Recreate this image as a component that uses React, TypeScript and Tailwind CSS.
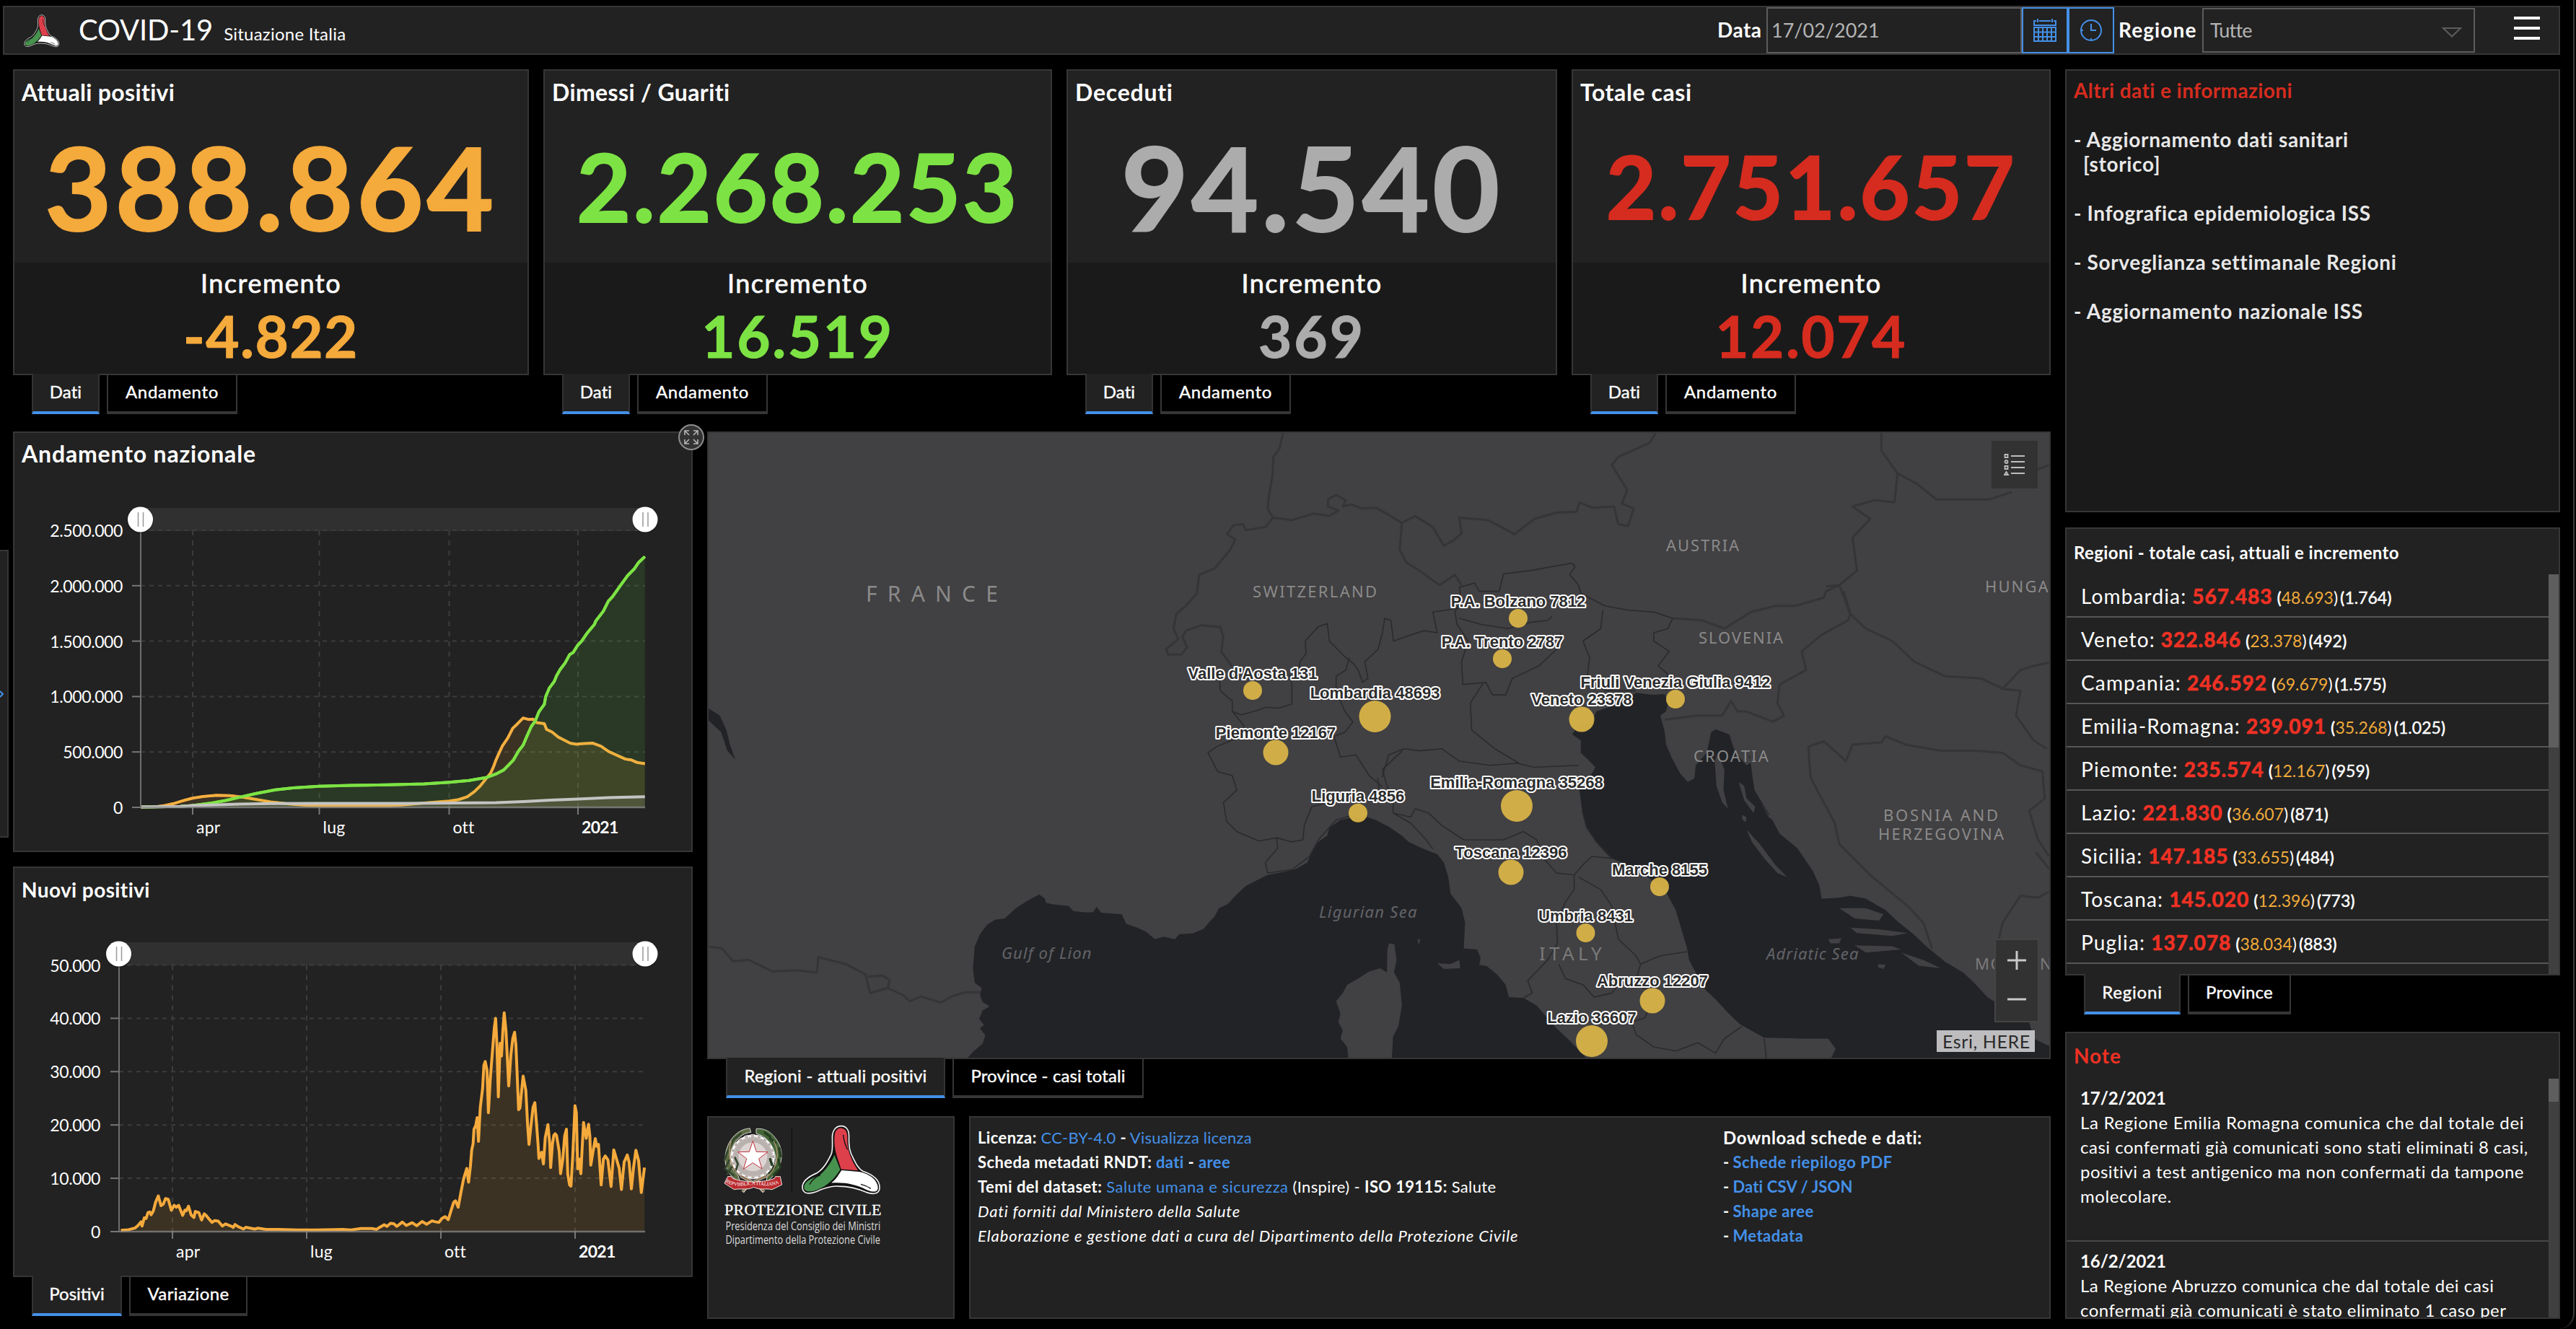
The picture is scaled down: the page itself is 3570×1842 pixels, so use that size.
import type { ReactNode } from "react";
import clsx from "clsx";

/* ---------- shared pieces ---------- */

function Panel({ className, children }: { className?: string; children?: ReactNode }) {
  return <section className={clsx("box-border overflow-hidden border-2 border-[#363636] bg-[#222222]", className)}>{children}</section>;
}

function Tabs({ tabs }: { tabs: { label: string; width: string; track: string }[] }) {
  return (
    <div className="relative z-10 ml-[26px] flex h-[54px] gap-[10px]">
      {tabs.map((t, i) => (
        <button
          key={t.label}
          className={clsx(
            "flex shrink-0 justify-center border-x-2 border-b-4 text-2xl leading-[46px] [-webkit-text-stroke:0.4px_white]",
            t.width,
            t.track,
            i === 0 ? "-mt-[2px] h-[56px] border-x-[#333333] border-b-[#4490e8] bg-[#222222] pt-[2px]" : "border-[#363636] bg-black",
          )}
        >
          {t.label}
        </button>
      ))}
    </div>
  );
}

function CivilProtectionMark({ className }: { className: string }) {
  return (
    <svg className={className} viewBox="388 56 340 296" preserveAspectRatio="none">
      <path
        d="M520 108C520 76 538 61 557 61C579 61 591 78 590 106C589 150 594 172 608 196C620 220 630 240 648 250C692 264 722 290 719 322C716 347 690 348 662 338C630 324 590 313 545 313C512 311 482 322 452 336C420 347 396 346 394 318C394 290 422 272 455 258C484 240 500 210 515 180C523 165 520 140 520 108Z"
        fill="#111" stroke="#f4f4f4" strokeWidth="5"
      />
      <path d="M529 106C531 76 545 68 560 70C580 74 584 92 583 116C582 165 602 208 628 247L557 242C546 200 526 170 529 106Z" fill="#dd3f4b" />
      <path d="M529 182C515 215 490 248 465 268C430 280 399 296 401 320C405 341 440 338 470 322C512 302 542 264 553 243Z" fill="#47924f" />
      <path d="M559 246L630 252C680 260 712 290 712 320C710 342 685 338 660 326C620 305 570 295 516 299C536 284 548 262 559 246Z" fill="#fff" />
      <path d="M566 98C568 120 574 140 584 160M470 266C450 272 432 290 424 306M640 305C655 309 668 314 682 323" fill="none" stroke="#111" strokeWidth="4" />
    </svg>
  );
}

/* ---------- header ---------- */

function Header() {
  return (
    <header className="ml-1 flex h-[68px] w-[3544px] border-2 border-[#363636] bg-[#222222] text-white">
      <CivilProtectionMark className="ml-[27px] mt-[10px] h-[46px] w-[50px]" />
      <div className="ml-[26px] flex items-baseline gap-[15px] leading-[62px]">
        <h1 className="text-[40px] tracking-[-0.15px]">COVID-19</h1>
        <span className="text-2xl tracking-[0.23px]">Situazione Italia</span>
      </div>
      <div className="ml-auto flex h-16">
        <label className="w-[68px] text-[28px] font-bold leading-[63px] tracking-[0.5px]">Data</label>
        <div className="h-16 w-[354px] border-2 border-[#5c5c5c] pl-[5px] text-[27px] leading-[60px] text-[#b4b4b4]">17/02/2021</div>
        <button className="flex h-16 w-16 items-center justify-center border-2 border-[#4490e8]">
          <svg className="h-8 w-8" viewBox="0 0 32 32" fill="none" stroke="#4490e8" strokeWidth="2">
            <path d="M4 3H1V9H31V3H28M8 3H24M6 0V5M26 0V5M1 12H31V31H1ZM1 18.5H31M1 25H31M7 12V31M13 12V31M19 12V31M25 12V31" />
          </svg>
        </button>
        <button className="flex h-16 w-16 items-center justify-center border-2 border-[#4490e8]">
          <svg className="h-[30px] w-[30px]" viewBox="0 0 30 30" fill="none" stroke="#4490e8" strokeWidth="2">
            <circle cx="15" cy="15" r="14" />
            <path d="M15 6V15H22M15 26V29M1 15H4" />
          </svg>
        </button>
        <label className="ml-[6px] w-[116px] text-[28px] font-bold leading-[63px] tracking-[1.1px]">Regione</label>
        <div className="mt-px flex h-[62px] w-[378px] items-center border-2 border-[#5c5c5c] pl-[9px] text-[27px] tracking-[-0.8px] text-[#b4b4b4]">
          Tutte
          <svg className="ml-auto mr-4 mt-[6px] h-[14px] w-7" viewBox="0 0 28 14" fill="none" stroke="#5c5c5c" strokeWidth="2">
            <path d="M2 1H26L14 12.5Z" />
          </svg>
        </div>
        <button className="ml-[54px] mr-[26px] mt-[13px] flex w-9 flex-col gap-[10px]">
          <span className="h-1 bg-white" />
          <span className="h-1 bg-white" />
          <span className="h-1 bg-white" />
        </button>
      </div>
    </header>
  );
}

/* ---------- indicator cards ---------- */

const CARDS = [
  { title: "Attuali positivi", track: "tracking-[0.33px]", w: "w-[715px]", color: "text-[#f5aa3c]", big: "388.864", size: "text-[160px] tracking-[4.6px]", inc: "-4.822", incTrack: "tracking-[1.4px]" },
  { title: "Dimessi / Guariti", track: "tracking-[0.37px]", w: "w-[705px]", color: "text-[#7de344]", big: "2.268.253", size: "text-[130px] tracking-[2.6px]", inc: "16.519", incTrack: "tracking-[2.6px]" },
  { title: "Deceduti", track: "tracking-[0.76px]", w: "w-[680px]", color: "text-[#acacac]", big: "94.540", size: "text-[161px] tracking-[3.9px]", inc: "369", incTrack: "tracking-[3px]" },
  { title: "Totale casi", track: "tracking-[0.59px]", w: "w-[664px]", color: "text-[#d62c1f]", big: "2.751.657", size: "text-[120px] tracking-[2.7px]", inc: "12.074", incTrack: "tracking-[2.4px]" },
];

function Cards() {
  return (
    <div className="flex gap-5">
      {CARDS.map((c) => (
        <div key={c.title} className={c.w}>
          <Panel className="flex h-[424px] flex-col">
            <h2 className={clsx("pl-[10px] pt-[10px] text-[32px] font-bold leading-10", c.track)}>{c.title}</h2>
            <div className={clsx("flex flex-1 items-center justify-center pt-1 font-bold leading-none [-webkit-text-stroke:2px_currentColor]", c.color, c.size)}>{c.big}</div>
            <div className="flex h-[154px] flex-col items-center bg-[#1a1a1a] pt-[6px]">
              <span className="text-[36px] leading-[44px] tracking-[1.5px] [-webkit-text-stroke:0.7px_white]">Incremento</span>
              <span className={clsx("mt-[11px] text-[80px] font-bold leading-none [-webkit-text-stroke:1px_currentColor]", c.color, c.incTrack)}>{c.inc}</span>
            </div>
          </Panel>
          <Tabs tabs={[{ label: "Dati", width: "w-[94px]", track: "tracking-[0.1px]" }, { label: "Andamento", width: "w-[181px]", track: "tracking-[0.7px]" }]} />
        </div>
      ))}
    </div>
  );
}

/* ---------- charts ---------- */

type ChartProps = {
  viewBox: string;
  height: string;
  x0: number;
  trackY: number;
  trackH: number;
  y0: number;
  step: number;
  yLabels: string[];
  xTicks: { x: number; label: string }[];
  labelX: number;
  children: ReactNode;
};

const X1 = 894;

function Chart({ viewBox, height, x0, trackY, trackH, y0, step, yLabels, xTicks, labelX, children }: ChartProps) {
  const top = y0 - step * (yLabels.length - 1);
  const cy = trackY + trackH / 2;
  return (
    <svg className={clsx("block w-[938px]", height)} viewBox={viewBox}>
      <rect x={x0} y={trackY} width={X1 - x0} height={trackH} fill="#303030" />
      {yLabels.map((l, i) => {
        const y = y0 - step * i;
        return (
          <g key={l}>
            {i > 0 && <line x1={x0} x2={X1} y1={y} y2={y} stroke="#3c3c3c" strokeWidth="2" strokeDasharray="6 6" />}
            {i < yLabels.length - 1 && <line x1={x0 - 12} x2={x0} y1={y} y2={y} stroke="#777" strokeWidth="2" />}
            <text x={labelX} y={y + 9} textAnchor="end" className="fill-white text-[23px] tracking-[-0.4px]">{l}</text>
          </g>
        );
      })}
      {xTicks.map((t, i) => (
        <g key={t.label}>
          <line x1={t.x} x2={t.x} y1={top} y2={y0} stroke="#3c3c3c" strokeWidth="2" strokeDasharray="7 7" />
          <line x1={t.x} x2={t.x} y1={y0} y2={y0 + 10} stroke="#777" strokeWidth="2" />
          <text x={t.x + 5} y={y0 + 36} className={clsx("fill-white text-[23px]", i === 3 ? "font-bold tracking-[-0.7px]" : "tracking-[0.2px]")}>{t.label}</text>
        </g>
      ))}
      {children}
      <line x1={x0} x2={x0} y1={cy} y2={y0} stroke="#6e6e6e" strokeWidth="2" />
      <line x1={x0} x2={X1} y1={y0} y2={y0} stroke="#8a8a8a" strokeOpacity="0.75" strokeWidth="2.5" />
      {[x0 - 0.5, X1].map((x) => (
        <g key={x}>
          <circle cx={x} cy={cy + 1} r="18" fill="#111" opacity="0.5" />
          <circle cx={x} cy={cy} r="17.5" fill="#fff" />
          <path d={`M${x - 3} ${cy - 10}V${cy + 10}M${x + 4} ${cy - 10}V${cy + 10}`} stroke="#999" strokeWidth="1.5" />
        </g>
      ))}
    </svg>
  );
}

type SeriesProps = { points: string; from: number; to: number; base: number; color: string; fill: string };

function Series({ points, from, to, base, color, fill }: SeriesProps) {
  return (
    <>
      <path d={`M${from} ${base}L${points}L${to} ${base}Z`} className={fill} />
      <polyline points={points} fill="none" stroke={color} strokeWidth="4" strokeLinejoin="round" vectorEffect="non-scaling-stroke" />
    </>
  );
}

const POSITIVI =
  "312,1362 345,1361 365,1357 385,1350 405,1340 427,1331 450,1325 480,1321 510,1322 540,1328 570,1336 600,1344 640,1351 680,1356 720,1358 780,1358 860,1358 900,1354 940,1348 996,1341 1017,1336 1036,1326 1052,1308 1065,1288 1078,1262 1088,1243 1095,1218 1099,1200 1106,1175 1114,1148 1126,1120 1137,1086 1147,1071 1160,1050 1172,1055 1182,1054 1190,1066 1207,1070 1212,1090 1224,1099 1238,1117 1247,1124 1264,1138 1278,1142 1290,1140 1314,1138 1333,1149 1349,1167 1370,1182 1387,1194 1400,1197 1413,1206 1430,1210";
const GUARITI =
  "312,1362 400,1360 427,1357 470,1348 500,1339 530,1328 570,1314 610,1302 650,1295 708,1289 780,1286 860,1284 940,1281 996,1275 1040,1269 1080,1258 1100,1246 1117,1232 1128,1214 1138,1198 1150,1165 1160,1145 1168,1115 1178,1080 1187,1060 1195,1028 1207,1002 1210,975 1218,945 1229,922 1234,902 1242,880 1253,857 1263,828 1271,820 1281,795 1290,780 1302,752 1318,722 1321,710 1338,675 1349,640 1358,625 1375,587 1392,550 1406,528 1416,505 1430,484";
const DECEDUTI =
  "312,1362 400,1360 427,1357 470,1355 530,1352 600,1350 700,1349 900,1349 1000,1348 1100,1347 1160,1343 1220,1338 1281,1334 1350,1329 1430,1326";
const NUOVI =
  "268,1244 285,1242 300,1236 306,1228 313,1216 315,1230 320,1203 324,1205 328,1186 332,1184 335,1193 340,1180 345,1152 351,1131 357,1163 362,1158 367,1140 373,1142 380,1178 386,1162 391,1168 396,1162 405,1195 410,1178 413,1180 418,1165 424,1194 430,1202 433,1182 441,1186 447,1210 453,1190 457,1195 463,1206 470,1218 476,1212 484,1214 493,1230 500,1223 515,1232 517,1235 521,1225 528,1232 540,1240 545,1234 565,1240 572,1237 590,1241 620,1241 660,1243 700,1243 760,1241 778,1243 800,1238 825,1238 835,1241 840,1236 852,1226 858,1231 866,1221 873,1222 880,1231 892,1217 901,1228 914,1219 924,1229 936,1215 946,1224 958,1213 965,1216 973,1218 980,1205 987,1199 994,1209 1000,1180 1006,1152 1010,1147 1016,1168 1022,1120 1028,1075 1035,1041 1039,1086 1043,1035 1046,980 1049,960 1051,912 1055,900 1058,874 1061,952 1065,840 1070,780 1073,702 1076,690 1080,720 1083,858 1087,750 1092,655 1096,580 1099,548 1102,640 1105,806 1109,630 1112,672 1115,590 1118,530 1122,590 1128,770 1133,665 1137,615 1141,594 1144,635 1150,848 1153,842 1157,780 1160,738 1166,785 1170,900 1173,962 1177,905 1182,840 1186,825 1190,900 1193,960 1195,1008 1201,988 1205,1026 1209,940 1215,897 1219,960 1221,1038 1225,960 1228,932 1231,927 1234,932 1240,985 1243,1058 1248,1010 1252,935 1256,912 1259,1060 1263,1095 1266,1099 1270,1000 1275,835 1278,858 1281,1042 1284,1010 1288,1058 1291,970 1294,890 1300,942 1305,896 1308,935 1310,1030 1315,985 1320,943 1323,968 1327,962 1333,1095 1338,1010 1342,1000 1348,1013 1355,1100 1361,980 1367,1010 1373,1040 1378,1110 1384,1020 1391,997 1395,1020 1400,1108 1405,1035 1410,981 1416,1015 1422,1120 1429,1038";

function ChartColumn() {
  return (
    <div className="flex w-[942px] flex-col">
      <Panel className="h-[583px]">
        <h2 className="h-[47px] pl-[10px] pt-[9px] text-[32px] font-bold leading-10 tracking-[0.83px]">Andamento nazionale</h2>
        <Chart
          viewBox="20 647 938 532" height="h-[532px]" x0={195} trackY={704} trackH={32} y0={1119} step={76.8} labelX={170}
          yLabels={["0", "500.000", "1.000.000", "1.500.000", "2.000.000", "2.500.000"]}
          xTicks={[{ x: 267, label: "apr" }, { x: 442.5, label: "lug" }, { x: 622.5, label: "ott" }, { x: 801, label: "2021" }]}
        >
          <g transform="translate(0 580) scale(0.625 0.3954)">
            <Series points={POSITIVI} from={312} to={1430} base={1363} color="#f5aa3c" fill="fill-[#f5aa3c]/12" />
            <Series points={GUARITI} from={312} to={1430} base={1363} color="#7de344" fill="fill-[#5fc840]/14" />
            <polyline points={POSITIVI} fill="none" stroke="#f5b041" strokeWidth="3.2" strokeOpacity="0.85" vectorEffect="non-scaling-stroke" />
            <polyline points={GUARITI} fill="none" stroke="#7de344" strokeWidth="4" vectorEffect="non-scaling-stroke" />
            <Series points={DECEDUTI} from={312} to={1430} base={1363} color="#c4c4c4" fill="fill-[#c4c4c4]/12" />
          </g>
        </Chart>
      </Panel>
      <Panel className="mt-5 h-[569px]">
        <h2 className="h-[49px] pl-[10px] pt-[10px] text-[28px] font-bold leading-10 tracking-[0.4px]">Nuovi positivi</h2>
        <Chart
          viewBox="20 1252 938 516" height="h-[516px]" x0={165} trackY={1306} trackH={32} y0={1707} step={73.9} labelX={139}
          yLabels={["0", "10.000", "20.000", "30.000", "40.000", "50.000"]}
          xTicks={[{ x: 239, label: "apr" }, { x: 425, label: "lug" }, { x: 611, label: "ott" }, { x: 797, label: "2021" }]}
        >
          <g transform="translate(0 1180) scale(0.625 0.4222)">
            <Series points={NUOVI} from={268} to={1429} base={1248} color="#f5aa3c" fill="fill-[#f5aa3c]/12" />
          </g>
        </Chart>
      </Panel>
      <Tabs tabs={[{ label: "Positivi", width: "w-[125px]", track: "tracking-[0px]" }, { label: "Variazione", width: "w-[164px]", track: "tracking-[0.4px]" }]} />
    </div>
  );
}

/* ---------- map ---------- */

const MARKERS = [
  { x: 1736, y: 957, r: 13, label: "Valle d'Aosta 131" },
  { x: 1905.5, y: 993, r: 22, label: "Lombardia 48693" },
  { x: 1768, y: 1043, r: 17.5, label: "Piemonte 12167" },
  { x: 1882, y: 1126.7, r: 13, label: "Liguria 4856" },
  { x: 2104, y: 857, r: 13, label: "P.A. Bolzano 7812" },
  { x: 2082, y: 913, r: 13, label: "P.A. Trento 2787" },
  { x: 2322, y: 969, r: 13, label: "Friuli Venezia Giulia 9412" },
  { x: 2192, y: 997, r: 17.5, label: "Veneto 23378" },
  { x: 2102, y: 1117, r: 22, label: "Emilia-Romagna 35268" },
  { x: 2094, y: 1209, r: 17.5, label: "Toscana 12396" },
  { x: 2300, y: 1229, r: 13, label: "Marche 8155" },
  { x: 2197.5, y: 1293, r: 13, label: "Umbria 8431" },
  { x: 2290, y: 1387, r: 17.5, label: "Abruzzo 12207" },
  { x: 2206, y: 1443, r: 22, label: "Lazio 36607" },
];

const PLACES = [
  { x: 1200, y: 834, t: "FRANCE", c: "text-[30px] tracking-[14.2px] fill-[#8a8a8a]" },
  { x: 1736, y: 828, t: "SWITZERLAND", c: "text-[22px] tracking-[2.3px] fill-[#8a8a8a]" },
  { x: 2309, y: 764, t: "AUSTRIA", c: "text-[22px] tracking-[1.9px] fill-[#8a8a8a]" },
  { x: 2354, y: 892, t: "SLOVENIA", c: "text-[22px] tracking-[1.9px] fill-[#8a8a8a]" },
  { x: 2751, y: 821, t: "HUNGA", c: "text-[22px] tracking-[2.1px] fill-[#8a8a8a]" },
  { x: 2347, y: 1056, t: "CROATIA", c: "text-[22px] tracking-[2.2px] fill-[#8a8a8a]" },
  { x: 2610, y: 1138, t: "BOSNIA AND", c: "text-[22px] tracking-[2.75px] fill-[#8a8a8a]" },
  { x: 2603, y: 1164, t: "HERZEGOVINA", c: "text-[22px] tracking-[2.25px] fill-[#8a8a8a]" },
  { x: 2737, y: 1344, t: "MO", c: "text-[22px] tracking-[1.5px] fill-[#7a7a7a]" },
  { x: 2827, y: 1344, t: "N", c: "text-[22px] fill-[#7a7a7a]" },
  { x: 2133, y: 1331, t: "ITALY", c: "text-[26px] tracking-[5.3px] fill-[#7a7a7a]" },
  { x: 1388, y: 1329, t: "Gulf of Lion", c: "text-[22px] italic tracking-[1.1px] fill-[#626367]" },
  { x: 1828, y: 1272, t: "Ligurian Sea", c: "text-[22px] italic tracking-[1.25px] fill-[#626367]" },
  { x: 2448, y: 1330, t: "Adriatic Sea", c: "text-[22px] italic tracking-[1.1px] fill-[#626367]" },
];

const WEST_SEA =
  "M603 1530L620 1510 640 1492 646 1472 634 1455 643 1447 632 1432 640 1412 656 1402 640 1392 634 1375 638 1358 622 1345 618 1310 622 1258 634 1228 650 1205 668 1193 690 1190 715 1165 745 1145 768 1132 781 1142 783 1152 800 1156 835 1160 845 1172 870 1175 890 1175 898 1162 908 1176 955 1180 965 1203 990 1212 1010 1222 1030 1240 1050 1234 1075 1240 1085 1228 1115 1226 1140 1215 1152 1200 1165 1185 1175 1165 1195 1155 1215 1132 1235 1112 1260 1098 1285 1085 1320 1078 1350 1070 1375 1055 1385 1030 1400 1005 1420 990 1425 970 1450 952 1480 945 1510 945 1530 952 1559 968 1589 990 1604 1005 1634 1020 1669 1035 1684 1055 1694 1090 1699 1130 1724 1165 1732 1200 1729 1262 1759 1265 1767 1285 1764 1302 1781 1305 1804 1325 1824 1350 1831 1380 1864 1382 1894 1400 1914 1425 1939 1455 1969 1485 2009 1530Z";
const CORSICA =
  "M1468 1530L1465 1500 1450 1480 1455 1460 1445 1440 1450 1420 1440 1390 1455 1370 1465 1350 1490 1335 1515 1318 1540 1310 1555 1320 1556 1265 1560 1250 1572 1252 1577 1290 1571 1320 1584 1345 1589 1400 1581 1450 1569 1475 1566 1530Z";
const ADRIATIC =
  "M510 690L560 672 600 645 640 650 665 648 672 670 668 690 655 700 665 740 668 770 680 800 700 840 717 860 732 852 735 820 760 790 770 740 780 733 810 745 830 775 858 800 864 850 868 880 885 910 905 945 925 985 965 1020 1000 1075 1015 1110 1020 1142 1060 1140 1085 1135 1120 1142 1165 1170 1195 1200 1225 1225 1260 1260 1300 1295 1340 1320 1365 1345 1395 1380 1440 1410 1490 1440 1500 1480 1540 1500 1540 1530 1040 1530 1052 1505 1035 1480 980 1480 890 1478 835 1445 810 1420 780 1385 757 1362 735 1320 720 1290 715 1260 690 1170 665 1120 640 1100 590 1065 545 1045 510 1005 488 970 478 930 472 880 485 850 500 840 508 825 490 805 475 790 475 760 455 745 470 725 500 715Z";
const ISLANDS =
  "M785 790L800 830 798 880 808 925 795 910 782 870 778 810ZM812 750L850 790 862 812 850 820 825 790ZM832 860L845 870 850 900 870 920 866 935 845 905ZM880 905L900 940 955 975 930 970 900 945ZM850 975L880 1010 915 1060 942 1090 920 1080 890 1045 862 1005ZM840 940L850 945 848 958 840 950ZM1060 1165L1120 1165 1160 1180 1150 1195 1095 1190ZM1085 1212L1150 1216 1215 1225 1180 1232 1100 1225ZM1095 1255L1180 1257 1200 1265 1120 1272ZM1200 1272L1250 1290 1290 1310 1240 1304ZM1035 1240L1065 1238 1060 1250 1040 1250ZM1148 1300L1165 1302 1160 1312 1148 1308ZM150 1298L180 1300 200 1290 202 1310 165 1312ZM105 1240L112 1240 108 1254Z";
const BORDERS_WEST =
  "M1320 17L1312 55 1298 75 1296 120 1288 170 1285 200 1297 222 1280 245 1235 252 1230 238 1208 240 1193 262 1212 275 1200 300 1165 345 1130 360 1125 405 1100 435 1078 455 1072 490 1083 515 1055 540 1060 553 1090 552 1103 535 1092 510 1100 495 1135 482 1178 486 1185 510 1180 545 1205 582M1297 222L1340 228 1390 212 1425 218 1445 205 1422 195 1422 178 1440 167 1462 180 1455 195 1475 190 1500 200 1530 198 1559 215 1589 235M20 1258L50 1262 75 1293 110 1290 165 1318 215 1315 265 1320 268 1283 330 1300 375 1325 385 1370 425 1358 430 1340 415 1328 380 1330M425 1358L460 1375 475 1390 500 1378 545 1393 570 1378 600 1368 635 1368";
const BORDERS_EAST =
  "M70 235L100 218 140 245 165 290 185 278 205 260 200 222 265 228 325 262 370 225 420 210 465 208 472 185 500 198 550 195 560 238 582 242 595 200 568 188 580 155 545 95 560 75 630 42 645 17M70 235L65 300 80 330 110 350 155 385 190 360 205 385M683 465L750 470 800 490 860 450 915 435 960 435 1025 415 1030 400 1060 385 1100 350 1090 270 1130 225 1090 195 1140 180 1185 185 1192 115 1155 60 1155 17M1192 115L1235 140 1280 178 1400 178 1450 160M1510 105L1535 95M1030 388L1060 385 1085 455 1080 470 1020 505 975 545 985 590 925 625 920 670 935 700 910 715 850 690 830 690 815 665 795 700 740 700 665 710M1070 400L1085 455 1120 490 1180 520 1230 570 1300 605 1380 610 1430 635 1470 590 1500 580 1535 572M990 775L1025 762 1075 810 1090 770 1155 765 1165 750 1210 770 1290 785 1370 785 1430 790 1470 820 1520 835 1525 900 1490 930 1510 1000 1535 1040M990 775L995 850 1050 960 1060 1010 1130 1085 1215 1160 1250 1200 1270 1262M1425 635L1470 640 1460 700 1500 760 1530 780M1420 1245L1430 1200 1470 1135 1510 1140 1535 1125M1505 1030L1535 1070";
const REGIONS_WEST =
  "M1178 640L1205 665 1205 690 1225 698 1260 688 1280 680 1310 682 1340 672 1340 625 1335 600M1178 640L1176 610M1205 690L1232 725 1215 755 1170 775 1150 790 1172 835 1205 845 1215 880 1185 910 1192 955 1215 980 1265 1003 1305 995 1340 1005 1365 1000 1368 965 1385 920 1440 905M1305 995L1308 1020 1280 1055 1285 1080 1340 1072 1380 1040 1400 1000 1440 952 1480 940M1355 600L1358 570 1372 550 1370 520 1400 485 1420 478 1425 520 1460 558 1480 575 1490 590 1500 620 1512 610 1505 570 1535 540 1545 500 1550 465 1564 470 1570 520 1610 505 1639 495 1669 500 1659 450 1724 440M1470 560L1462 590 1440 605 1440 640 1460 690 1478 715 1460 740 1435 750 1450 800 1485 795 1515 845 1545 872M1590 785L1545 830 1555 870 1569 900";
const REGIONS_EAST =
  "M205 430L200 390 235 380 245 400 290 400 300 358 360 350 455 332 462 340 450 360 470 385 475 405 530 435 580 445 640 450 683 465 672 490 640 500 640 520 675 545 650 580 672 600 668 640M200 430L190 450 195 480 220 520 205 570 208 625 260 620 275 650 305 650 320 610 380 580 420 540 430 500M200 465L250 480 310 490 360 475 400 470 410 460M255 620L225 670 228 735 280 780 335 815M25 850L40 795 75 780 110 785 160 780 200 810 270 820 330 815 370 825 470 820M525 445L520 490 480 520 495 560 490 600 530 640 600 640M15 850L20 890 50 900 50 935 90 945 100 925 130 935 160 965 210 1000 300 1000 345 980 375 1000 395 1050 420 1080 460 1085 460 1120 440 1150 420 1200 422 1250 400 1290 355 1340 365 1370 345 1382M50 935L90 960 125 1000 140 1022M460 1085L480 1060 500 1040 545 1045M470 1090L520 1120 545 1160 560 1240 600 1280 610 1300 655 1280 715 1270M425 1300L440 1335 480 1350 505 1380 545 1370 560 1350M610 1300L600 1340 640 1380 620 1430 590 1440 600 1470 640 1500 690 1510 740 1490 780 1515 800 1480 840 1450M890 1480L895 1528M478 930L488 970 510 1005 545 1045";

function MapView() {
  return (
    <div className="relative h-[870px] overflow-hidden border-2 border-[#363636] bg-[#414042]">
      <svg className="block h-[866px] w-[1858px]" viewBox="982 600 1858 866">
        <g transform="translate(970 590) scale(0.61225 0.574)" strokeLinejoin="round">
          <path d={WEST_SEA} fill="#222327" />
          <path d={CORSICA} fill="#414042" />
          <path d="M18 682L45 700 60 735 68 770 80 806 62 785 48 740 18 710Z" fill="#222327" />
          <path d={BORDERS_WEST} fill="none" stroke="#353538" strokeWidth="3" vectorEffect="non-scaling-stroke" />
          <path d={REGIONS_WEST} fill="none" stroke="#2b2b2e" strokeWidth="1.6" vectorEffect="non-scaling-stroke" />
          <g transform="translate(1519 0)">
            <path d={ADRIATIC} fill="#222327" />
            <path d={ISLANDS} fill="#414042" />
            <path d={BORDERS_EAST} fill="none" stroke="#353538" strokeWidth="3" vectorEffect="non-scaling-stroke" />
            <path d={REGIONS_EAST} fill="none" stroke="#2b2b2e" strokeWidth="1.6" vectorEffect="non-scaling-stroke" />
          </g>
        </g>
        <g className="font-['Noto_Sans',sans-serif]">
          {PLACES.map((p) => (
            <text key={p.t} x={p.x} y={p.y} className={p.c}>{p.t}</text>
          ))}
        </g>
        {MARKERS.map((m) => (
          <circle key={m.label} cx={m.x} cy={m.y} r={m.r} fill="#dbb647" fillOpacity="0.93" />
        ))}
        <g className="font-['Liberation_Sans',sans-serif]">
          {MARKERS.map((m) => (
            <text key={m.label} x={m.x} y={m.y - m.r - 3} textAnchor="middle" className="fill-[#2c2c2c] stroke-white stroke-[4px] text-[22px] font-bold [paint-order:stroke] [stroke-linejoin:round]">
              {m.label}
            </text>
          ))}
        </g>
      </svg>
      <button className="absolute right-[16px] top-[11px] flex h-[66px] w-16 items-center justify-center bg-[#323232]">
        <svg className="h-[30px] w-[30px]" viewBox="0 0 30 30" fill="none" stroke="#bdbdbd" strokeWidth="1.8">
          <path d="M10 3H29M10 11H29M10 19H29M10 27H29M1.500 1H5.500V5H1.500ZM1.500 17H5.500V21H1.500ZM1 29L3.500 25L6 29Z" />
          <circle cx="3.500" cy="11" r="2" />
        </svg>
      </button>
      <div className="absolute bottom-[49px] right-[14px] flex h-[116px] w-[62px] flex-col border-2 border-[#444444] bg-[#323232]">
        <svg className="h-full w-full" viewBox="0 0 58 112" stroke="#c8c8c8" strokeWidth="3">
          <path d="M16 28H42M29 15V41M16 82H42" />
        </svg>
      </div>
      <div className="absolute bottom-[8px] right-[20px] h-[30px] w-[136px] bg-[#bdbdbf] pl-2 text-[25px] leading-[30px] tracking-[0.6px] text-[#2b2b2b]">Esri, HERE</div>
    </div>
  );
}

/* ---------- footer ---------- */

const TEETH = Array.from({ length: 20 }, (_, i) => i * 18);

function Emblem() {
  return (
    <svg className="absolute left-[20px] top-[13px] h-[92px] w-[84px]" viewBox="66 62 252 276">
      <circle cx="190" cy="186" r="92" fill="#fff" />
      <circle cx="190" cy="186" r="84" fill="#b9b1ae" />
      {TEETH.map((a) => (
        <rect key={a} x="182" y="94" width="15" height="14" fill="#b9b1ae" stroke="#fff" strokeWidth="2" transform={`rotate(${a} 190 186)`} />
      ))}
      <circle cx="190" cy="186" r="80" fill="#b9b1ae" />
      <circle cx="190" cy="186" r="60" fill="#ddd5d3" />
      <path d="M190 120L205 165 252 166 215 194 228 236 190 211 151 237 164 194 128 166 175 165Z" fill="#fff" stroke="#c0303a" strokeWidth="3" />
      <g stroke="#f2f0ea" strokeWidth="2.500">
        <path d="M178 68C140 68 100 100 84 145C64 200 74 262 138 292L128 262C92 230 88 190 104 150C120 112 148 86 182 84Z" fill="#5d6c45" />
        <path d="M204 70C244 64 276 90 298 130C318 172 318 236 246 292L250 262C288 232 292 196 276 156C262 122 236 96 204 90Z" fill="#46663a" />
      </g>
      <path d="M86 160L72 200M92 200L74 236M104 226L84 258M112 110L92 150M140 88L118 108M116 190L128 216L118 246M80 240L110 264" stroke="#33452e" strokeWidth="8" strokeLinecap="round" fill="none" />
      <path d="M300 150L306 184M296 196L304 230M262 196L270 220M282 226L260 254M262 110L284 128M240 86L262 102M300 236L278 262" stroke="#243d20" strokeWidth="10" strokeLinecap="round" />
      <path d="M100 120C84 170 94 230 140 268M276 120C306 170 290 240 246 272" fill="none" stroke="#b79a75" strokeWidth="4" />
      <path d="M140 266C170 280 210 300 236 332M246 266C210 280 170 300 148 332" stroke="#f2f0ea" strokeWidth="12" fill="none" />
      <path d="M140 266C170 280 210 300 236 330M246 266C210 280 170 300 148 330" stroke="#8d7657" strokeWidth="8" fill="none" />
      <path d="M86 268L100 268 106 276C150 292 160 284 194 292C230 284 240 292 280 276L284 268 304 268 311 302 270 322C240 316 220 326 194 312C166 326 146 316 112 322L72 296Z" fill="#b92a2e" stroke="#efe6e2" strokeWidth="3" />
      <path id="motto" d="M76 290C110 316 150 304 194 302C236 304 276 314 308 290" fill="none" />
      <text className="fill-white font-['Liberation_Serif',serif] text-[21px]">
        <textPath href="#motto" textLength="228">REPVBBLICA ITALIANA</textPath>
      </text>
    </svg>
  );
}

function Link({ children, className }: { children: ReactNode; className?: string }) {
  return <a className={clsx("text-[#4490e8]", className)}>{children}</a>;
}

function Footer() {
  return (
    <div className="mt-[25px] flex gap-5">
      <Panel className="relative h-[281px] w-[343px]">
        <Emblem />
        <div className="absolute left-[115px] top-[14px] h-[90px] w-px bg-[#0c0c0c]" />
        <CivilProtectionMark className="absolute left-[128px] top-[10px] h-[98px] w-[112px]" />
        <div className="pl-[22px] pt-[115px] font-['Liberation_Serif',serif] text-[22px] leading-[26px] tracking-[0.26px] [-webkit-text-stroke:0.3px_white]">PROTEZIONE CIVILE</div>
        <div className="w-[300px] origin-left scale-x-[0.755] whitespace-nowrap pl-[31px] font-['Open_Sans',sans-serif] text-[17px] leading-[18.500px] text-[#dedede]">
          Presidenza del Consiglio dei Ministri
          <br />
          Dipartimento della Protezione Civile
        </div>
      </Panel>
      <Panel className="flex h-[281px] w-[1499px] pl-[10px] pt-[11px] text-[22px] leading-[34px]">
        <div className="w-[1033px]">
          <p className="tracking-[0.2px]"><b className="tracking-[0.4px]">Licenza:</b> <Link>CC-BY-4.0</Link> <b>-</b> <Link className="tracking-[0.2px]">Visualizza licenza</Link></p>
          <p className="tracking-[0.4px]"><b>Scheda metadati RNDT: <Link>dati</Link> - <Link>aree</Link></b></p>
          <p className="tracking-[0.35px]"><b className="tracking-[0.45px]">Temi del dataset:</b> <Link className="tracking-[0.5px]">Salute umana e sicurezza</Link> (Inspire) - <b>ISO 19115:</b> Salute</p>
          <p className="italic tracking-[0.75px]">Dati forniti dal Ministero della Salute</p>
          <p className="italic tracking-[0.9px]">Elaborazione e gestione dati a cura del Dipartimento della Protezione Civile</p>
        </div>
        <div className="font-bold tracking-[0.45px]">
          <p className="text-2xl leading-[34px] tracking-[0.6px]">Download schede e dati:</p>
          <p>- <Link className="-ml-px tracking-[0.55px]">Schede riepilogo PDF</Link></p>
          <p>- <Link className="-ml-px tracking-[0.15px]">Dati CSV / JSON</Link></p>
          <p>- <Link className="-ml-px">Shape aree</Link></p>
          <p>- <Link className="-ml-px">Metadata</Link></p>
        </div>
      </Panel>
    </div>
  );
}

/* ---------- right column ---------- */

const REGIONI = [
  ["Lombardia", "567.483", "48.693", "1.764"],
  ["Veneto", "322.846", "23.378", "492"],
  ["Campania", "246.592", "69.679", "1.575"],
  ["Emilia-Romagna", "239.091", "35.268", "1.025"],
  ["Piemonte", "235.574", "12.167", "959"],
  ["Lazio", "221.830", "36.607", "871"],
  ["Sicilia", "147.185", "33.655", "484"],
  ["Toscana", "145.020", "12.396", "773"],
  ["Puglia", "137.078", "38.034", "883"],
];

function RightColumn() {
  return (
    <div className="flex w-[686px] flex-col">
      <section className="h-[614px] border-2 border-[#363636] bg-[#1a1a1a] pl-[10px] pt-[10px] text-[28px] font-bold leading-[34px] tracking-[0.65px] text-[#e8e8e8]">
        <h3 className="tracking-[0.42px] text-[#d62c1f]">Altri dati e informazioni</h3>
        <p className="mt-[34px]">- Aggiornamento dati sanitari</p>
        <p className="pl-[13px]">[storico]</p>
        <p className="mt-[34px]">- Infografica epidemiologica ISS</p>
        <p className="mt-[34px]">- Sorveglianza settimanale Regioni</p>
        <p className="mt-[34px] tracking-[0.72px]">- Aggiornamento nazionale ISS</p>
      </section>

      <Panel className="mt-[21px] h-[621px]">
        <h3 className="h-[63px] pl-[10px] pt-[14px] text-2xl font-bold leading-[38px] tracking-[0.4px]">Regioni - totale casi, attuali e incremento</h3>
        <div className="flex h-[554px]">
          <ul className="w-[668px]">
            {REGIONI.map(([name, total, active, inc]) => (
              <li key={name} className="flex h-[60px] items-baseline border-b-2 border-[#565656] pl-[20px] text-[28px] leading-[60px]">
                <span className="tracking-[1.15px]">{name}:</span>
                <span className="ml-2 font-bold tracking-[1px] text-[#ef3124] [-webkit-text-stroke:0.7px_#ef3124]">{total}</span>
                <span className="ml-[6px] text-[23px] font-bold">(</span>
                <span className="text-[23px] text-[#f0aa3a]">{active}</span>
                <span className="text-[23px]">)</span>
                <span className="ml-[3px] text-[23px] font-bold">(</span>
                <span className="text-[23px] [-webkit-text-stroke:0.4px_white]">{inc}</span>
                <span className="text-[23px] font-bold">)</span>
              </li>
            ))}
          </ul>
          <div className="w-[14px] bg-[#404040]">
            <div className="h-[240px] bg-[#5e5e5e]" />
          </div>
        </div>
      </Panel>
      <Tabs tabs={[{ label: "Regioni", width: "w-[134px]", track: "tracking-[0.8px]" }, { label: "Province", width: "w-[143px]", track: "tracking-[0.2px]" }]} />

      <Panel className="mt-[24px] h-[398px]">
        <h3 className="h-[63px] pl-[10px] pt-[14px] text-[28px] font-bold leading-[34px] tracking-[0.9px] text-[#ef3124]">Note</h3>
        <div className="flex h-[331px] overflow-hidden text-2xl leading-[34px] tracking-[0.55px]">
          <div className="w-[668px]">
            <article className="h-[226px] whitespace-nowrap border-b-2 border-[#474747] pl-[19px] pt-[10px]">
              <b className="tracking-[-0.1px]">17/2/2021</b>
              <p className="tracking-[0.67px]">La Regione Emilia Romagna comunica che dal totale dei</p>
              <p className="tracking-[0.5px]">casi confermati già comunicati sono stati eliminati 8 casi,</p>
              <p className="tracking-[0.46px]">positivi a test antigenico ma non confermati da tampone</p>
              <p>molecolare.</p>
            </article>
            <article className="whitespace-nowrap pl-[19px] pt-[10px]">
              <b className="tracking-[-0.1px]">16/2/2021</b>
              <p>La Regione Abruzzo comunica che dal totale dei casi</p>
              <p className="tracking-[0.45px]">confermati già comunicati è stato eliminato 1 caso per</p>
            </article>
          </div>
          <div className="w-[14px] bg-[#404040]">
            <div className="h-8 bg-[#5e5e5e]" />
          </div>
        </div>
      </Panel>
    </div>
  );
}

/* ---------- page ---------- */

export default function App() {
  return (
    <div className="relative h-[1842px] w-[3570px] overflow-hidden bg-black pt-2 font-['Lato',sans-serif] text-white">
      <Header />
      <main className="ml-[18px] mt-5 flex gap-5">
        <div className="w-[2824px]">
          <Cards />
          <div className="mt-6 flex gap-5">
            <ChartColumn />
            <div className="w-[1862px]">
              <MapView />
              <Tabs tabs={[{ label: "Regioni - attuali positivi", width: "w-[304px]", track: "tracking-[0.25px]" }, { label: "Province - casi totali", width: "w-[265px]", track: "tracking-[0.1px]" }]} />
              <Footer />
            </div>
          </div>
        </div>
        <RightColumn />
      </main>

      {/* collapsed side drawer */}
      <div className="absolute -left-[2px] top-[762px] flex h-[399px] w-[14px] items-center border-2 border-[#363636] bg-[#222222]">
        <svg className="h-3 w-[5px]" viewBox="0 0 5 12" fill="none" stroke="#4490e8" strokeWidth="2">
          <path d="M0 2L4 6L0 10" />
        </svg>
      </div>

      {/* expand button on the chart corner */}
      <div className="absolute left-[940px] top-[588px] z-20 flex h-9 w-9 items-center justify-center rounded-full border-2 border-[#8c8c8c] bg-[#333333]">
        <svg className="h-5 w-5" viewBox="0 0 20 20" fill="none" stroke="#b5b5b5" strokeWidth="1.6">
          <path d="M1 7V1H7M1 1L7 7M13 1H19V7M19 1L13 7M1 13V19H7M1 19L7 13M13 19H19V13M19 19L13 13" />
        </svg>
      </div>

      {/* window edge */}
      <div className="pointer-events-none absolute inset-y-0 right-[2px] w-10 rounded-br-[22px] border-r-2 border-[#3a3a3a]" />
    </div>
  );
}
